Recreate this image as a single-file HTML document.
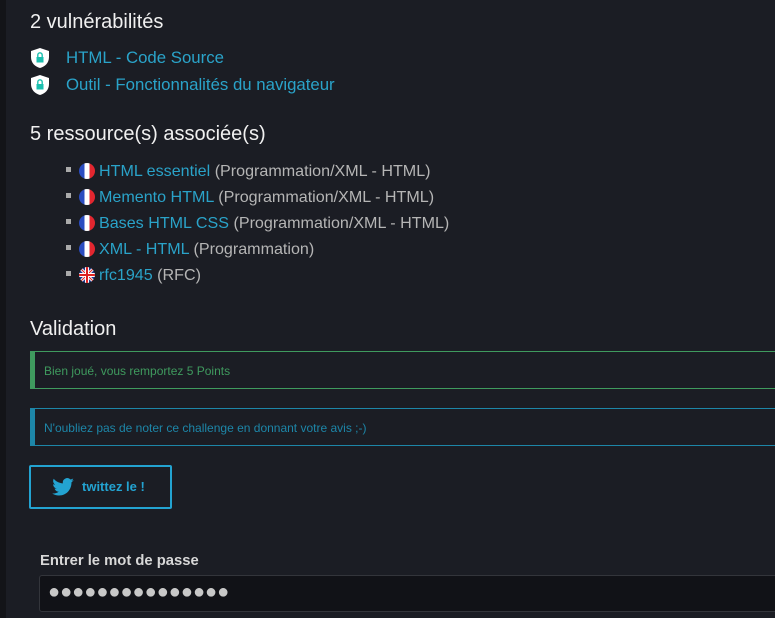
<!DOCTYPE html>
<html><head><meta charset="utf-8"><style>
*{margin:0;padding:0;box-sizing:border-box}
body{width:775px;height:618px;overflow:hidden;background:#1b1d24;font-family:"Liberation Sans","DejaVu Sans",sans-serif;position:relative;color:#d8d8d8}
.strip{position:absolute;left:0;top:0;width:6px;height:618px;background:#131418}
.a{position:absolute;white-space:nowrap}
h2{font-weight:normal;font-size:20px;color:#f0f0f0}
.lk{color:#2aa3c9}
.g{color:#b5b5b5}
.vl{font-size:16.8px}
.sh{position:absolute;width:20px;height:22px}
.li{font-size:16.1px}
.li .sq{display:inline-block;width:5px;height:5px;background:#aaa;margin-right:8px;vertical-align:middle;position:relative;top:-2px}
.flag{display:inline-block;width:16px;height:16px;border-radius:50%;vertical-align:middle;position:relative;top:-1px;margin-right:4px;background:linear-gradient(90deg,#2a4cc0 0 33%,#fff 33% 67%,#e3262f 67%)}
.box{position:absolute;left:30px;width:760px;height:38px;border:1px solid;border-left-width:5px;font-size:12px;padding:12px 0 0 9px}
</style></head><body>
<div class="strip"></div>
<h2 class="a" style="left:30px;top:11px">2 vulnérabilités</h2>
<svg class="sh" style="left:30px;top:47px" viewBox="0 0 20 22"><path d="M10 1 L19 4 V10 C19 16 15 19.5 10 21 C5 19.5 1 16 1 10 V4 Z" fill="#fff"/><rect x="6.5" y="10" width="7" height="5.5" fill="#1bbfaf"/><path d="M7.8 10 V8 a2.2 2.2 0 0 1 4.4 0 V10" stroke="#1bbfaf" stroke-width="1.4" fill="none"/></svg>
<div class="a vl lk" style="left:66px;top:48px">HTML - Code Source</div>
<svg class="sh" style="left:30px;top:74px" viewBox="0 0 20 22"><path d="M10 1 L19 4 V10 C19 16 15 19.5 10 21 C5 19.5 1 16 1 10 V4 Z" fill="#fff"/><rect x="6.5" y="10" width="7" height="5.5" fill="#1bbfaf"/><path d="M7.8 10 V8 a2.2 2.2 0 0 1 4.4 0 V10" stroke="#1bbfaf" stroke-width="1.4" fill="none"/></svg>
<div class="a vl lk" style="left:66px;top:75px">Outil - Fonctionnalités du navigateur</div>
<h2 class="a" style="left:30px;top:123px">5 ressource(s) associée(s)</h2>
<div class="a li" style="left:66px;top:162px"><span class="sq"></span><span class="flag"></span><span class="lk">HTML essentiel</span> <span class="g">(Programmation/XML - HTML)</span></div>
<div class="a li" style="left:66px;top:188px"><span class="sq"></span><span class="flag"></span><span class="lk">Memento HTML</span> <span class="g">(Programmation/XML - HTML)</span></div>
<div class="a li" style="left:66px;top:214px"><span class="sq"></span><span class="flag"></span><span class="lk">Bases HTML CSS</span> <span class="g">(Programmation/XML - HTML)</span></div>
<div class="a li" style="left:66px;top:240px"><span class="sq"></span><span class="flag"></span><span class="lk">XML - HTML</span> <span class="g">(Programmation)</span></div>
<div class="a li" style="left:66px;top:266px"><span class="sq"></span><svg class="flag" viewBox="0 0 16 16" style="background:none"><clipPath id="c"><circle cx="8" cy="8" r="8"/></clipPath><g clip-path="url(#c)"><rect width="16" height="16" fill="#223a8c"/><path d="M0 0L16 16M16 0L0 16" stroke="#fff" stroke-width="3"/><path d="M0 0L16 16M16 0L0 16" stroke="#d22" stroke-width="1"/><path d="M8 0V16M0 8H16" stroke="#fff" stroke-width="4"/><path d="M8 0V16M0 8H16" stroke="#d22" stroke-width="2"/></g></svg><span class="lk">rfc1945</span> <span class="g">(RFC)</span></div>
<h2 class="a" style="left:30px;top:318px">Validation</h2>
<div class="box" style="top:351px;border-color:#3f9a5e;color:#3f9a5e">Bien joué, vous remportez 5 Points</div>
<div class="box" style="top:408px;border-color:#1d86a8;color:#1d86a8">N'oubliez pas de noter ce challenge en donnant votre avis ;-)</div>
<div class="a" style="left:29px;top:465px;width:143px;height:44px;border:2px solid #23a3d1;border-radius:2px"></div>
<svg class="a" style="left:52px;top:478px" width="22" height="18" viewBox="0 0 24 20"><path d="M24 2.4c-.9.4-1.8.6-2.8.8 1-.6 1.8-1.6 2.2-2.7-1 .6-2 1-3.1 1.2A4.9 4.9 0 0 0 11.9 6C7.8 5.8 4.2 3.9 1.7.9c-1.4 2.4-.5 5 1.5 6.5-.8 0-1.6-.3-2.2-.6 0 2.4 1.7 4.4 3.9 4.9-.7.2-1.5.2-2.2.1.6 2 2.5 3.4 4.6 3.4A9.9 9.9 0 0 1 0 17.2 14 14 0 0 0 7.5 19.4c9.1 0 14.2-7.7 13.9-14.6 1-.7 1.8-1.5 2.6-2.4z" fill="#23a3d1"/></svg>
<div class="a" style="left:82px;top:479px;font-size:13px;font-weight:bold;color:#23a3d1">twittez le !</div>
<div class="a" style="left:40px;top:553px;font-size:14.8px;font-weight:bold;color:#d8d8d8">Entrer le mot de passe</div>
<div class="a" style="left:39px;top:575px;width:760px;height:37px;background:#111217;border:1px solid #33353b;border-radius:3px;padding:5px 0 0 8px;font-size:20px;color:#c8c8c8;letter-spacing:0px">●●●●●●●●●●●●●●●</div>
</body></html>
